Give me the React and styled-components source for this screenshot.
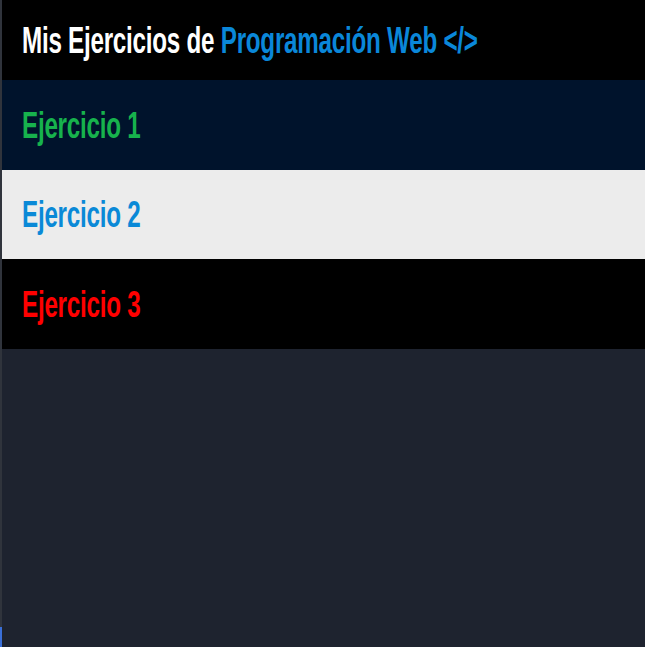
import React from "react";
import styled, { createGlobalStyle } from "styled-components";

const GlobalStyle = createGlobalStyle`
  html, body {
    margin: 0;
    padding: 0;
    height: 100%;
    background-color: #1e232f;
  }
  #root {
    height: 100%;
  }
`;

const Page = styled.div`
  display: flex;
  min-height: 100vh;
  background-color: #1e232f;
`;
const Edge = styled.div`
  width: 2px;
  display: flex;
  flex-direction: column;
  justify-content: flex-end;
  background-color: #30343c;
`;
const EdgeMark = styled.div`
  height: 20px;
  background-color: #3a6fd8;
`;
const Main = styled.div`
  flex: 1;
  display: flex;
  flex-direction: column;
`;
const Header = styled.header`
  height: 80px;
  display: flex;
  align-items: center;
  padding: 0 20px;
  background-color: #000;
`;
const Row = styled.div`
  height: ${(p) => p.$h || 90}px;
  display: flex;
  align-items: center;
  padding: 0 20px;
  background-color: ${(p) => p.$bg};
`;
const Title = styled.span`
  display: inline-block;
  font-family: "Liberation Sans", Arial, sans-serif;
  font-weight: 700;
  font-size: 29px;
  line-height: 1;
  letter-spacing: -0.3px;
  color: ${(p) => p.$color || "#fff"};
  transform: scale(0.835, 1.27);
  transform-origin: left center;
  white-space: nowrap;
`;
const Accent = styled.span`
  color: #0a87d9;
`;

const ejercicios = [
  { name: "Ejercicio 1", bg: "#00132c", color: "#17b24d", h: 90 },
  { name: "Ejercicio 2", bg: "#ececec", color: "#0a89d7", h: 89 },
  { name: "Ejercicio 3", bg: "#000000", color: "#ff0000", h: 90 },
];

const App = () => {
  return (
    <>
      <GlobalStyle />
      <Page>
        <Edge>
          <EdgeMark />
        </Edge>
        <Main>
          <Header>
            <Title>
              Mis Ejercicios de <Accent>Programación Web &lt;/&gt;</Accent>
            </Title>
          </Header>
          {ejercicios.map((e) => (
            <Row key={e.name} $bg={e.bg} $h={e.h}>
              <Title $color={e.color}>{e.name}</Title>
            </Row>
          ))}
        </Main>
      </Page>
    </>
  );
};

export default App;
